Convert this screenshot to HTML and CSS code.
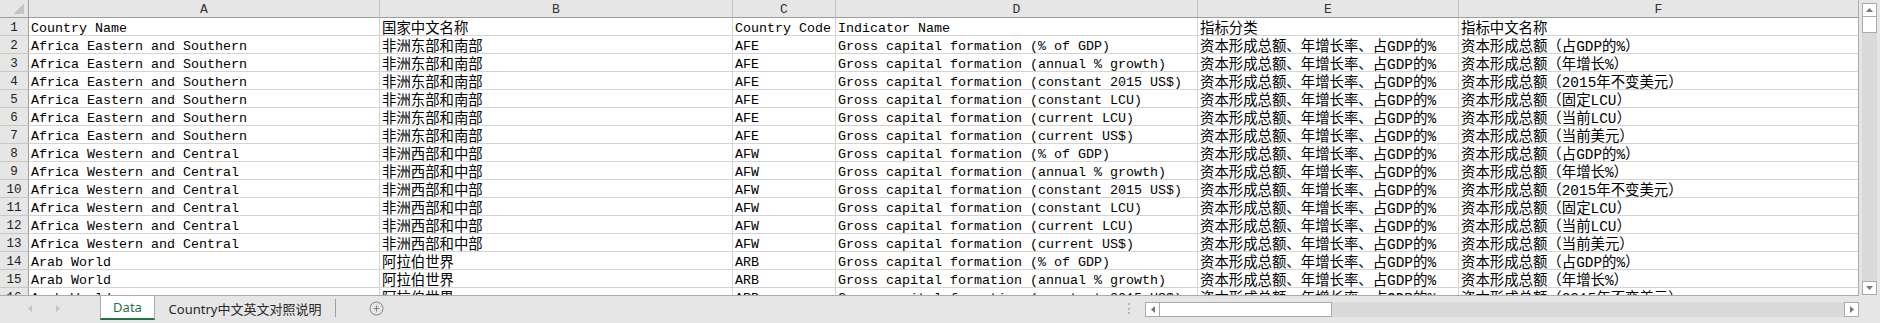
FILE: index.html
```html
<!DOCTYPE html>
<html lang="zh-CN">
<head>
  <meta charset="UTF-8">
  <meta name="viewport" content="width=device-width, initial-scale=1.0">
  <title>Data</title>
  <link rel="stylesheet" href="styles.css">
</head>
<body>
  <div class="window">
    <div class="main">
      <div class="sheet" id="sheet">
        <div class="corner"></div>
        <div class="col-head">A</div>
        <div class="col-head">B</div>
        <div class="col-head">C</div>
        <div class="col-head">D</div>
        <div class="col-head">E</div>
        <div class="col-head last">F</div>
      </div>
      <div class="vscroll">
        <div class="sb-btn">
          <svg width="7" height="4" viewBox="0 0 7 4"><path d="M0 4 L3.5 0 L7 4 Z" fill="#777"/></svg>
        </div>
        <div class="sb-thumb v"></div>
        <div class="sb-track"></div>
        <div class="sb-btn">
          <svg width="7" height="4" viewBox="0 0 7 4"><path d="M0 0 L3.5 4 L7 0 Z" fill="#777"/></svg>
        </div>
      </div>
    </div>

    <div class="bottom">
      <div class="tab-nav">
        <svg width="4" height="7" viewBox="0 0 4 7"><path d="M4 0 L0 3.5 L4 7 Z" fill="#c4c4c4"/></svg>
        <svg width="4" height="7" viewBox="0 0 4 7"><path d="M0 0 L4 3.5 L0 7 Z" fill="#c4c4c4"/></svg>
      </div>
      <div class="tab active">Data</div>
      <div class="tab">Country中文英文对照说明</div>
      <div class="tab-sep"></div>
      <div class="add-sheet">
        <svg width="15" height="15" viewBox="0 0 15 15">
          <circle cx="7.5" cy="7.5" r="6.5" fill="none" stroke="#858585" stroke-width="1"/>
          <path d="M4.5 7.5 H10.5 M7.5 4.5 V10.5" stroke="#858585" stroke-width="1.2"/>
        </svg>
      </div>
      <div class="dots"></div>
      <div class="hscroll">
        <div class="sb-btn h">
          <svg width="4" height="7" viewBox="0 0 4 7"><path d="M4 0 L0 3.5 L4 7 Z" fill="#777"/></svg>
        </div>
        <div class="sb-thumb h"></div>
        <div class="sb-track"></div>
        <div class="sb-btn h">
          <svg width="4" height="7" viewBox="0 0 4 7"><path d="M0 0 L4 3.5 L0 7 Z" fill="#777"/></svg>
        </div>
      </div>
    </div>
  </div>

  <script>
    const sheet = document.getElementById('sheet');

    const countries = [
      ['Africa Eastern and Southern', '非洲东部和南部', 'AFE'],
      ['Africa Western and Central', '非洲西部和中部', 'AFW'],
      ['Arab World', '阿拉伯世界', 'ARB']
    ];
    const indicators = [
      ['(% of GDP)', '（占GDP的%）'],
      ['(annual % growth)', '（年增长%）'],
      ['(constant 2015 US$)', '（2015年不变美元）'],
      ['(constant LCU)', '（固定LCU）'],
      ['(current LCU)', '（当前LCU）'],
      ['(current US$)', '（当前美元）']
    ];

    const rows = [['Country Name', '国家中文名称', 'Country Code', 'Indicator Name', '指标分类', '指标中文名称']];
    countries.forEach(c => {
      indicators.forEach(ind => {
        rows.push([
          c[0], c[1], c[2],
          'Gross capital formation ' + ind[0],
          '资本形成总额、年增长率、占GDP的%',
          '资本形成总额' + ind[1]
        ]);
      });
    });

    // columns B, E and F hold chinese text
    const zhCols = [1, 4, 5];

    rows.slice(0, 16).forEach((row, i) => {
      const num = document.createElement('div');
      num.className = 'row-head';
      num.textContent = i + 1;
      sheet.appendChild(num);

      row.forEach((text, j) => {
        const cell = document.createElement('div');
        cell.className = 'cell';
        if (zhCols.includes(j)) cell.classList.add('zh');
        if (j === 5) cell.classList.add('last');
        cell.textContent = text;
        sheet.appendChild(cell);
      });
    });
  </script>
</body>
</html>
```

FILE: styles.css
```css
* {
  box-sizing: border-box;
}
body {
  margin: 0;
  background: #e6e6e6;
  font-family: "Liberation Mono", "Noto Sans CJK SC", monospace;
}
.window {
  width: 1880px;
  height: 323px;
  overflow: hidden;
  display: flex;
  flex-direction: column;
}
.main {
  display: flex;
  height: 296px;
}

/* sheet grid */
.sheet {
  width: 1859px;
  height: 296px;
  background: #fff;
  border-right: 1px solid #ababab;
  border-bottom: 1px solid #ababab;
  overflow: hidden;
  display: grid;
  grid-template-columns: 29px 351px 353px 103px 362px 261px 399px;
  grid-auto-rows: 18px;
  align-content: start;
}
.corner {
  background: #e6e6e6 linear-gradient(135deg, transparent 50%, #c4c4c4 50%) no-repeat right 4px bottom 3px / 10px 10px;
  border-right: 1px solid #9e9e9e;
  border-bottom: 1px solid #9e9e9e;
}
.col-head {
  background: #e6e6e6;
  border-right: 1px solid #c2c2c2;
  border-bottom: 1px solid #9e9e9e;
  text-align: center;
  font-size: 13px;
  line-height: 16px;
  padding-top: 2px;
  color: #333;
}
.row-head {
  background: #e6e6e6;
  border-right: 1px solid #9e9e9e;
  border-bottom: 1px solid #c8c8c8;
  text-align: center;
  font-size: 12.5px;
  line-height: 16px;
  padding-top: 2px;
  color: #222;
}
.cell {
  border-right: 1px solid #d4d4d4;
  border-bottom: 1px solid #d4d4d4;
  padding: 3px 0 0 2px;
  font-size: 13.33px;
  line-height: 16px;
  white-space: nowrap;
  overflow: hidden;
  color: #000;
}
.cell.zh {
  font-size: 14.4px;
}
.col-head.last,
.cell.last {
  border-right: none;
}

/* scrollbars */
.vscroll {
  width: 15px;
  height: 292px;
  margin: 3px 0 0 3px;
  display: flex;
  flex-direction: column;
  background: #dadada;
}
.sb-btn {
  width: 15px;
  height: 14px;
  background: #fff;
  border: 1px solid #ababab;
  display: flex;
  align-items: center;
  justify-content: center;
  flex-shrink: 0;
}
.sb-btn.h {
  width: 15px;
  height: 15px;
}
.sb-thumb {
  background: #fff;
  border: 1px solid #ababab;
  flex-shrink: 0;
}
.sb-thumb.v {
  height: 17px;
  margin-top: -1px;
}
.sb-thumb.h {
  width: 173px;
  margin-left: -1px;
}
.sb-track {
  flex: 1;
}

/* sheet tabs */
.bottom {
  display: flex;
  align-items: flex-start;
  height: 27px;
}
.tab-nav {
  width: 100px;
  height: 24px;
  display: flex;
  align-items: center;
  gap: 24px;
  padding-left: 28px;
}
.tab {
  height: 24px;
  width: 180px;
  display: flex;
  align-items: center;
  justify-content: center;
  font-family: "Noto Sans", "Noto Sans CJK SC", sans-serif;
  font-size: 13px;
  color: #262626;
}
.tab.active {
  width: 55px;
  background: #fff;
  color: #217346;
  border-left: 1px solid #ababab;
  border-right: 1px solid #ababab;
  border-bottom: 2px solid #217346;
}
.tab-sep {
  width: 1px;
  height: 18px;
  margin-top: 3px;
  background: #9e9e9e;
}
.add-sheet {
  margin: 5px 0 0 33px;
  width: 15px;
  height: 15px;
}
.add-sheet svg {
  display: block;
}
.dots {
  margin: 7px 0 0 auto;
  height: 11px;
  border-left: 2px dotted #b4b4b4;
}
.hscroll {
  width: 714px;
  height: 15px;
  margin: 6px 21px 0 15px;
  display: flex;
  background: #dadada;
}
```
